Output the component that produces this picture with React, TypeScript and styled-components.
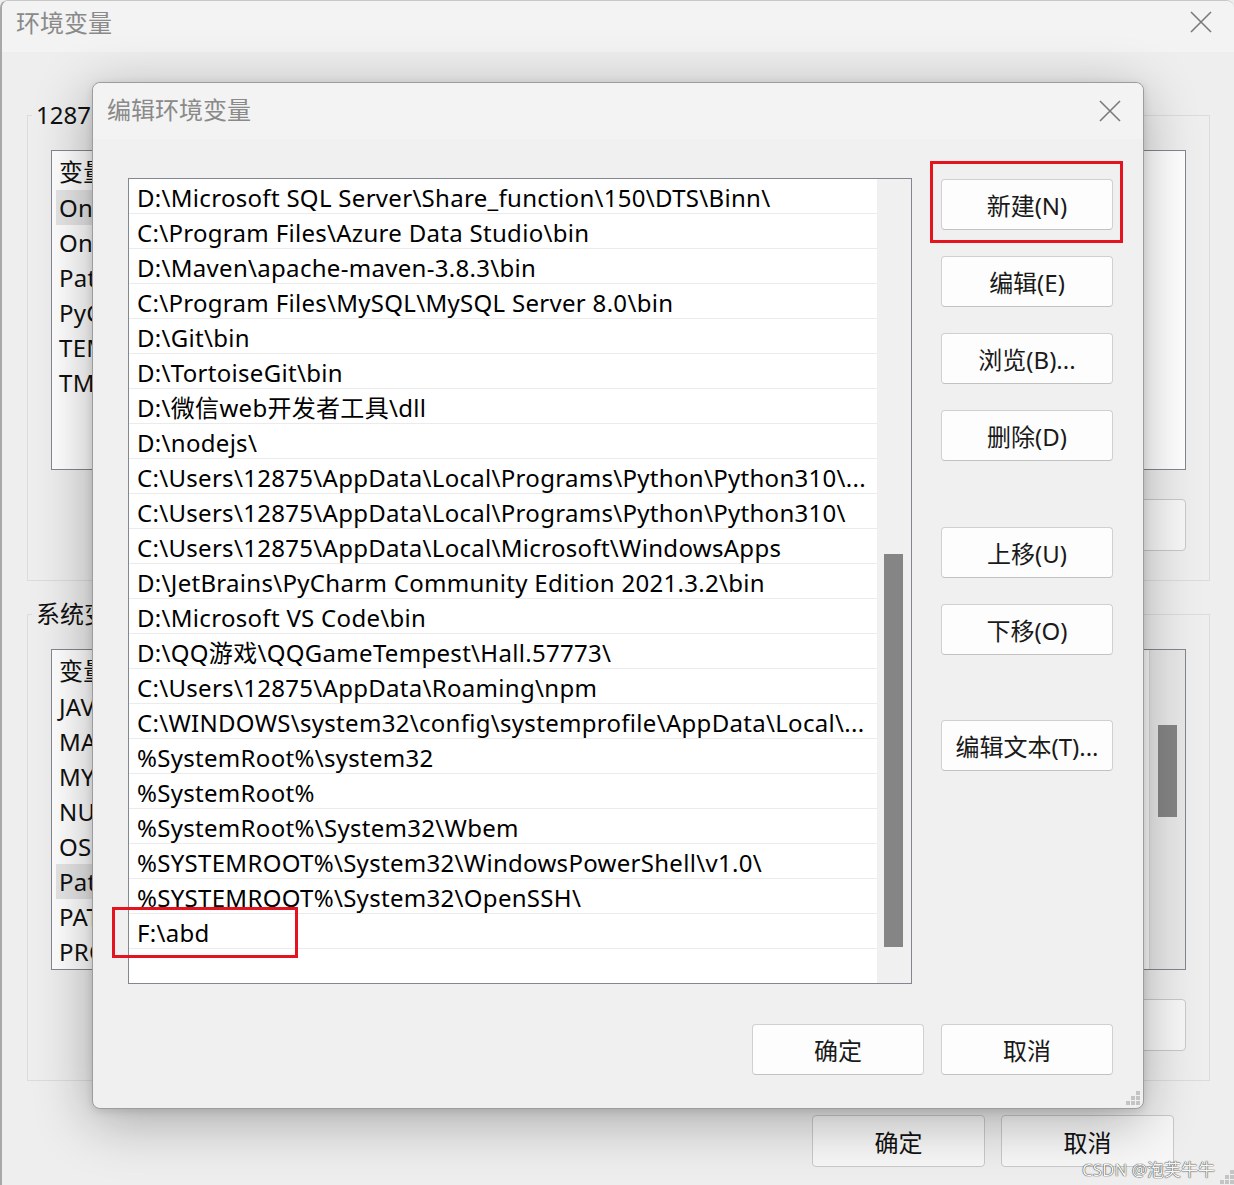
import styled, { createGlobalStyle } from 'styled-components';

const GlobalStyle = createGlobalStyle`
  html, body {
    margin: 0;
    padding: 0;
    background: #eeeeee;
  }
  body {
    font-family: "Noto Sans", "Noto Sans CJK SC", sans-serif;
    color: #111;
  }
  * {
    box-sizing: border-box;
  }
`;

const userVars = [
  ['OneDrive', 'C:\\Users\\12875\\OneDrive'],
  ['OneDriveConsumer', 'C:\\Users\\12875\\OneDrive'],
  ['Path', 'C:\\Users\\12875\\AppData\\Local\\Programs\\Python\\Python310\\...'],
  ['PyCharm Community Edition', 'D:\\JetBrains\\PyCharm Community Edition 2021.3.2\\bin;'],
  ['TEMP', 'C:\\Users\\12875\\AppData\\Local\\Temp'],
  ['TMP', 'C:\\Users\\12875\\AppData\\Local\\Temp'],
];

const systemVars = [
  ['JAVA_HOME', 'D:\\Java\\jdk1.8.0'],
  ['MAVEN_HOME', 'D:\\Maven\\apache-maven-3.8.3'],
  ['MYSQL_HOME', 'C:\\Program Files\\MySQL\\MySQL Server 8.0'],
  ['NUMBER_OF_PROCESSORS', '16'],
  ['OS', 'Windows_NT'],
  ['Path', 'D:\\Microsoft SQL Server\\Share_function\\150\\DTS\\Binn\\;...'],
  ['PATHEXT', '.COM;.EXE;.BAT;.CMD;.VBS;.VBE;.JS;.JSE;.WSF;.WSH;.MSC'],
  ['PROCESSOR_ARCHITECTURE', 'AMD64'],
];

const paths = [
  'D:\\Microsoft SQL Server\\Share_function\\150\\DTS\\Binn\\',
  'C:\\Program Files\\Azure Data Studio\\bin',
  'D:\\Maven\\apache-maven-3.8.3\\bin',
  'C:\\Program Files\\MySQL\\MySQL Server 8.0\\bin',
  'D:\\Git\\bin',
  'D:\\TortoiseGit\\bin',
  'D:\\微信web开发者工具\\dll',
  'D:\\nodejs\\',
  'C:\\Users\\12875\\AppData\\Local\\Programs\\Python\\Python310\\...',
  'C:\\Users\\12875\\AppData\\Local\\Programs\\Python\\Python310\\',
  'C:\\Users\\12875\\AppData\\Local\\Microsoft\\WindowsApps',
  'D:\\JetBrains\\PyCharm Community Edition 2021.3.2\\bin',
  'D:\\Microsoft VS Code\\bin',
  'D:\\QQ游戏\\QQGameTempest\\Hall.57773\\',
  'C:\\Users\\12875\\AppData\\Roaming\\npm',
  'C:\\WINDOWS\\system32\\config\\systemprofile\\AppData\\Local\\...',
  '%SystemRoot%\\system32',
  '%SystemRoot%',
  '%SystemRoot%\\System32\\Wbem',
  '%SYSTEMROOT%\\System32\\WindowsPowerShell\\v1.0\\',
  '%SYSTEMROOT%\\System32\\OpenSSH\\',
  'F:\\abd',
];

function CloseIcon() {
  return (
    <svg width="22" height="22" viewBox="0 0 22 22">
      <path d="M1 1 L21 21 M21 1 L1 21" stroke="#7a7a7a" strokeWidth="1.6" fill="none" />
    </svg>
  );
}

function Grip() {
  const dots = [
    [10, 0],
    [5, 5],
    [10, 5],
    [0, 10],
    [5, 10],
    [10, 10],
  ];
  return (
    <svg width="14" height="14" viewBox="0 0 14 14">
      {dots.map(([x, y]) => (
        <rect key={`${x}-${y}`} x={x} y={y} width="4" height="4" fill="#c4c4c4" />
      ))}
    </svg>
  );
}

export default function App() {
  return (
    <>
      <GlobalStyle />
      <S.Window>
        <S.WinTitle>
          <S.Caption>环境变量</S.Caption>
          <CloseIcon />
        </S.WinTitle>

        <S.Group $top={47}>
          <S.Legend>12875 的用户变量(U)</S.Legend>
          <S.BgList $height={320}>
            <S.BgContent>
              <S.BgHeader>
                <S.NameCell>变量</S.NameCell>
                <S.ValueCell>值</S.ValueCell>
              </S.BgHeader>
              {userVars.map(([name, value], i) => (
                <S.BgRow key={name + i} $active={i === 0}>
                  <S.NameCell>{name}</S.NameCell>
                  <S.ValueCell>{value}</S.ValueCell>
                </S.BgRow>
              ))}
            </S.BgContent>
          </S.BgList>
          <S.BgButtons>
            <S.BgButton>新建(N)...</S.BgButton>
            <S.BgButton>编辑(E)...</S.BgButton>
            <S.BgButton>删除(D)</S.BgButton>
          </S.BgButtons>
        </S.Group>

        <S.Group $top={17}>
          <S.Legend>系统变量(S)</S.Legend>
          <S.BgList $height={321}>
            <S.BgContent>
              <S.BgHeader>
                <S.NameCell>变量</S.NameCell>
                <S.ValueCell>值</S.ValueCell>
              </S.BgHeader>
              {systemVars.map(([name, value], i) => (
                <S.BgRow key={name + i} $active={i === 5}>
                  <S.NameCell>{name}</S.NameCell>
                  <S.ValueCell>{value}</S.ValueCell>
                </S.BgRow>
              ))}
            </S.BgContent>
            <S.BgScroll>
              <S.BgThumb />
            </S.BgScroll>
          </S.BgList>
          <S.BgButtons>
            <S.BgButton>新建(W)...</S.BgButton>
            <S.BgButton>编辑(I)...</S.BgButton>
            <S.BgButton>删除(L)</S.BgButton>
          </S.BgButtons>
        </S.Group>

        <S.WinFooter>
          <S.BgButton>确定</S.BgButton>
          <S.BgButton>取消</S.BgButton>
        </S.WinFooter>

        <S.WinGrip>
          <Grip />
        </S.WinGrip>

        <S.Dialog>
          <S.DialogTitle>
            <S.Caption $lift={6}>编辑环境变量</S.Caption>
            <CloseIcon />
          </S.DialogTitle>
          <S.DialogBody>
            <S.PathList>
              <S.PathRows>
                {paths.map((p) => (
                  <S.PathRow key={p}>{p}</S.PathRow>
                ))}
              </S.PathRows>
              <S.Scroll>
                <S.Thumb />
              </S.Scroll>
            </S.PathList>
            <S.ButtonCol>
              <S.Button>新建(N)</S.Button>
              <S.Button>编辑(E)</S.Button>
              <S.Button>浏览(B)...</S.Button>
              <S.Button>删除(D)</S.Button>
              <S.Button $space={40}>上移(U)</S.Button>
              <S.Button>下移(O)</S.Button>
              <S.Button $space={39}>编辑文本(T)...</S.Button>
            </S.ButtonCol>
          </S.DialogBody>
          <S.DialogFooter>
            <S.Button>确定</S.Button>
            <S.Button>取消</S.Button>
          </S.DialogFooter>

          <S.Mark $x={837} $y={78} $w={193} $h={82} />
          <S.Mark $x={19} $y={824} $w={186} $h={51} />
          <S.DialogGrip>
            <Grip />
          </S.DialogGrip>
        </S.Dialog>

        <S.Watermark>CSDN @泡芙牛牛</S.Watermark>
      </S.Window>
    </>
  );
}

const S = {
  Window: styled.div`
    position: relative;
    width: 1234px;
    height: 1185px;
    overflow: hidden;
    background: #eeeeee;
    border-left: 2px solid #a8a8a8;
    border-top: 1px solid #c8c8c8;
    border-radius: 8px 8px 0 0;
    display: flex;
    flex-direction: column;
  `,
  WinTitle: styled.div`
    height: 51px;
    flex-shrink: 0;
    background: #f3f3f3;
    display: flex;
    align-items: center;
    justify-content: space-between;
    padding: 0 22px 10px 14px;
    font-size: 24px;
    color: #8a8a8a;
  `,
  Caption: styled.span<{ $lift?: number }>`
    margin-bottom: ${({ $lift }) => $lift ?? 0}px;
  `,
  Group: styled.fieldset<{ $top: number }>`
    margin: ${({ $top }) => $top}px 24px 0 25px;
    padding: 0 23px 29px 23px;
    border: 1px solid #dcdcdc;
    min-width: 0;
  `,
  Legend: styled.legend`
    margin-left: -19px;
    padding: 0 4px;
    font-size: 24px;
    line-height: 32px;
    color: #111;
    white-space: nowrap;
  `,
  BgList: styled.div<{ $height: number }>`
    margin-top: 19px;
    height: ${({ $height }) => $height}px;
    background: #fff;
    border: 1px solid #828790;
    display: flex;
    overflow: hidden;
  `,
  BgContent: styled.div`
    flex: 1;
    min-width: 0;
  `,
  BgHeader: styled.div`
    height: 39px;
    display: flex;
    align-items: center;
    padding-left: 7px;
    font-size: 24px;
    letter-spacing: 0.3px;
  `,
  BgRow: styled.div<{ $active?: boolean }>`
    width: 1070px;
    height: 35px;
    margin: 0 4px;
    padding-left: 3px;
    display: flex;
    align-items: center;
    font-size: 24px;
    letter-spacing: 0.3px;
    white-space: nowrap;
    background: ${({ $active }) => ($active ? '#e6e6e6' : 'transparent')};
  `,
  NameCell: styled.span`
    width: 420px;
    flex-shrink: 0;
  `,
  ValueCell: styled.span`
    width: 620px;
    overflow: hidden;
  `,
  BgScroll: styled.div`
    width: 36px;
    flex-shrink: 0;
    background: #e8e8e8;
    border-left: 1px solid #dadada;
    padding: 75px 0 0 8px;
  `,
  BgThumb: styled.div`
    width: 19px;
    height: 92px;
    background: #858585;
  `,
  BgButtons: styled.div`
    margin-top: 29px;
    display: flex;
    justify-content: flex-end;
    gap: 16px;
  `,
  BgButton: styled.button`
    width: 173px;
    height: 52px;
    background: #f7f7f7;
    border: 1px solid #c9c9c9;
    border-radius: 4px;
    font-family: inherit;
    font-size: 24px;
    color: #111;
  `,
  WinFooter: styled.div`
    margin-top: 34px;
    padding-right: 60px;
    display: flex;
    justify-content: flex-end;
    gap: 16px;
  `,
  WinGrip: styled.div`
    position: absolute;
    right: 0;
    bottom: -4px;
  `,
  Dialog: styled.div`
    position: absolute;
    left: 90px;
    top: 81px;
    width: 1052px;
    height: 1027px;
    background: #f0f0f0;
    border: 1px solid #9d9d9d;
    border-radius: 8px;
    box-shadow: -2px 12px 56px rgba(0, 0, 0, 0.3), 0 2px 8px rgba(0, 0, 0, 0.12);
    display: flex;
    flex-direction: column;
  `,
  DialogTitle: styled.div`
    height: 56px;
    flex-shrink: 0;
    background: #f3f3f3;
    border-radius: 8px 8px 0 0;
    display: flex;
    align-items: center;
    justify-content: space-between;
    padding: 0 22px 0 14px;
    font-size: 24px;
    color: #8a8a8a;
  `,
  DialogBody: styled.div`
    display: flex;
    gap: 29px;
    padding: 39px 30px 0 35px;
  `,
  PathList: styled.div`
    width: 784px;
    height: 806px;
    flex-shrink: 0;
    background: #fff;
    border: 1px solid #828790;
    display: flex;
  `,
  PathRows: styled.div`
    flex: 1;
    min-width: 0;
  `,
  PathRow: styled.div`
    height: 35px;
    padding: 4px 0 0 8px;
    line-height: 30px;
    border-bottom: 1px solid #ebebeb;
    font-size: 24px;
    letter-spacing: 0.3px;
    color: #000;
    white-space: nowrap;
    overflow: hidden;
  `,
  Scroll: styled.div`
    width: 34px;
    flex-shrink: 0;
    background: #f0f0f0;
    padding: 375px 0 0 7px;
  `,
  Thumb: styled.div`
    width: 19px;
    height: 393px;
    background: #858585;
  `,
  ButtonCol: styled.div`
    width: 172px;
    display: flex;
    flex-direction: column;
    gap: 26px;
    padding-top: 1px;
  `,
  Button: styled.button<{ $space?: number }>`
    width: 172px;
    height: 51px;
    flex-shrink: 0;
    margin-top: ${({ $space }) => $space ?? 0}px;
    background: #fdfdfd;
    border: 1px solid #d0d0d0;
    border-bottom-color: #c2c2c2;
    border-radius: 4px;
    font-family: inherit;
    font-size: 24px;
    color: #1a1a1a;
    white-space: nowrap;
    padding: 0;
  `,
  DialogFooter: styled.div`
    display: flex;
    justify-content: flex-end;
    gap: 17px;
    padding: 40px 30px 0 0;
  `,
  Mark: styled.div<{ $x: number; $y: number; $w: number; $h: number }>`
    position: absolute;
    left: ${({ $x }) => $x}px;
    top: ${({ $y }) => $y}px;
    width: ${({ $w }) => $w}px;
    height: ${({ $h }) => $h}px;
    border: 3px solid #e3141f;
    pointer-events: none;
  `,
  DialogGrip: styled.div`
    position: absolute;
    right: 3px;
    bottom: 3px;
    line-height: 0;
  `,
  Watermark: styled.div`
    position: absolute;
    left: 1080px;
    top: 1155px;
    font-size: 17px;
    color: #f6f6f6;
    text-shadow: 0 0 1px rgba(0, 0, 0, 0.9), 0 0 1px rgba(0, 0, 0, 0.6);
    white-space: nowrap;
  `,
};
